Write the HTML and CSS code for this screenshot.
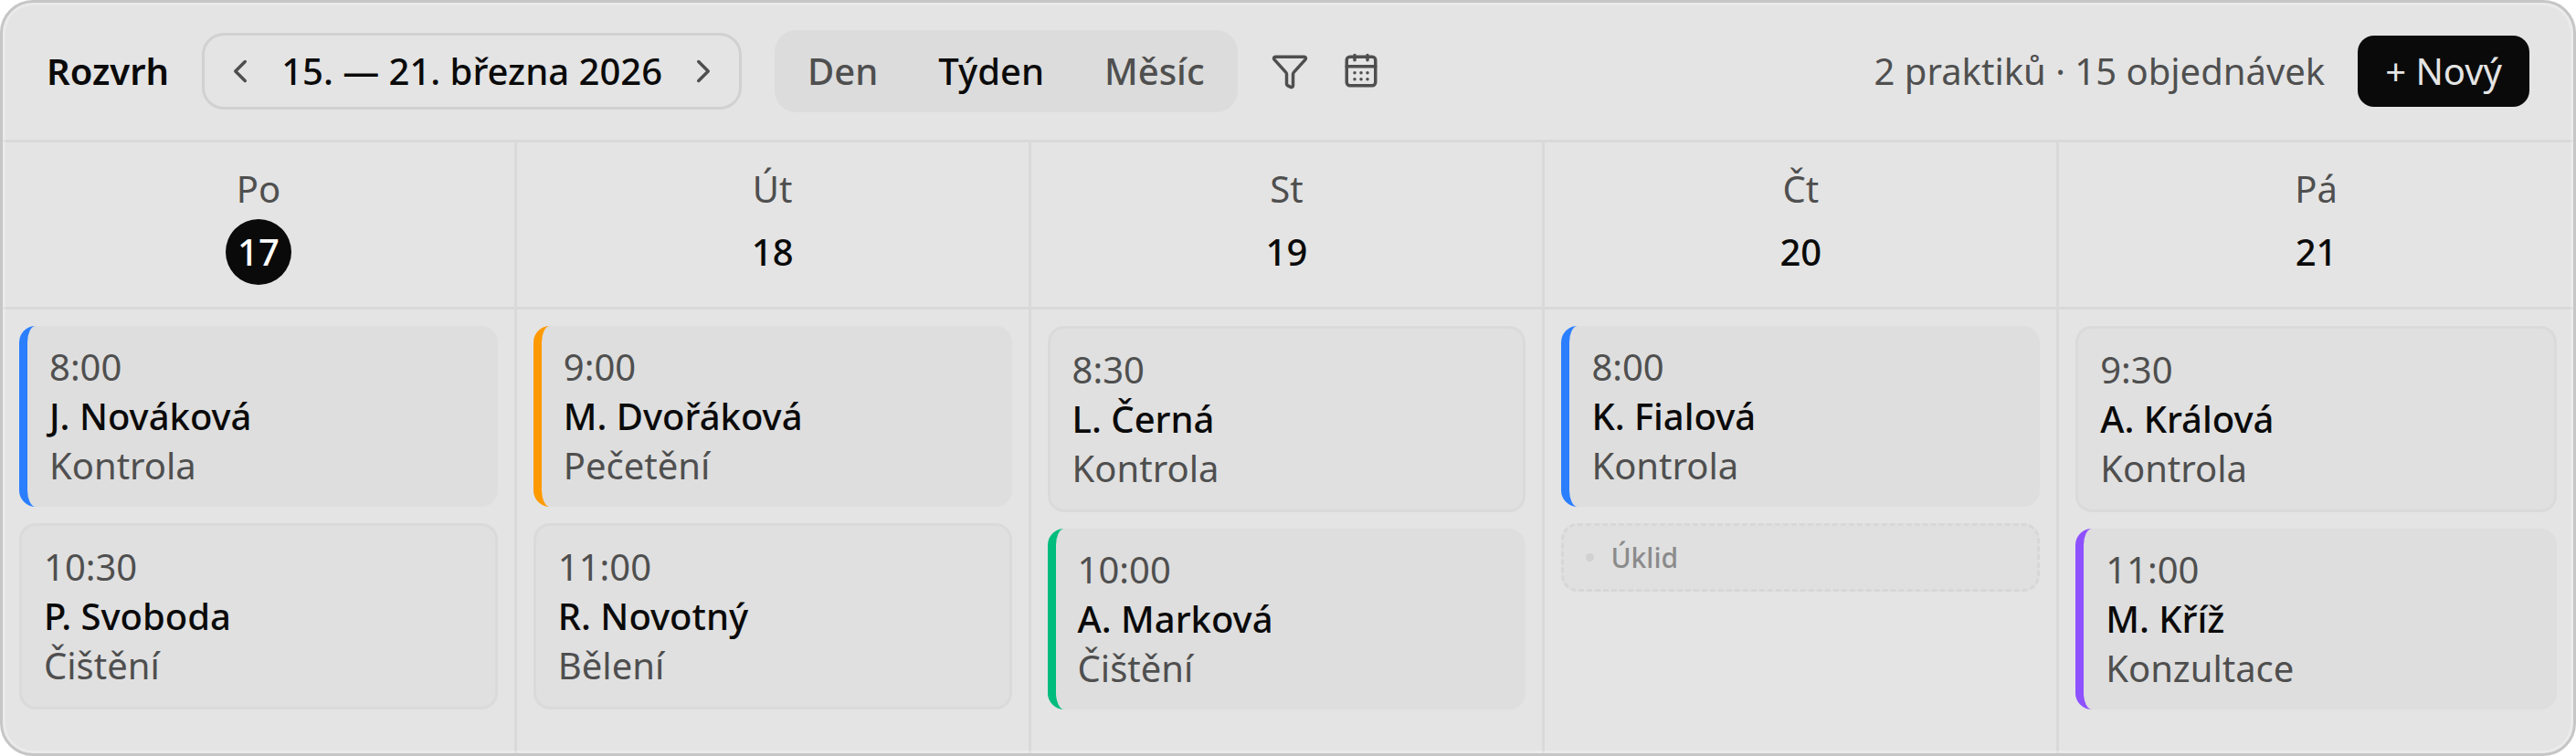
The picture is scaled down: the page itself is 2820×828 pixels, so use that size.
FILE: index.html
```html
<!DOCTYPE html>
<html lang="cs">
<head>
<meta charset="utf-8">
<meta name="viewport" content="width=device-width, initial-scale=1">
<title>Rozvrh</title>
<link rel="stylesheet" href="styles.css">
</head>
<body>
<main class="schedule">
  <header class="toolbar">
    <h1 class="title">Rozvrh</h1>
    <div class="range">
      <button class="icon-button" type="button" aria-label="Předchozí týden">
        <svg class="icon" viewBox="0 0 24 24"><path d="m15 18-6-6 6-6"/></svg>
      </button>
      <span class="range-label">15. — 21. března 2026</span>
      <button class="icon-button" type="button" aria-label="Další týden">
        <svg class="icon" viewBox="0 0 24 24"><path d="m9 18 6-6-6-6"/></svg>
      </button>
    </div>
    <div class="views">
      <button class="view" type="button">Den</button>
      <button class="view view-active" type="button" aria-pressed="true">Týden</button>
      <button class="view" type="button">Měsíc</button>
    </div>
    <button class="icon-button" type="button" aria-label="Filtr">
      <svg class="icon" viewBox="0 0 24 24"><path d="M10 20a1 1 0 0 0 .553.895l2 1A1 1 0 0 0 14 21v-7a2 2 0 0 1 .517-1.341L21.74 4.67A1 1 0 0 0 21 3H3a1 1 0 0 0-.742 1.67l7.225 7.989A2 2 0 0 1 10 14z"/></svg>
    </button>
    <button class="icon-button" type="button" aria-label="Kalendář">
      <svg class="icon" viewBox="0 0 24 24"><rect x="3" y="3" width="18" height="18" rx="2"/><path d="M8 2v3M16 2v3M3 9h18M8 13h.01M12 13h.01M16 13h.01M8 17h.01M12 17h.01M16 17h.01"/></svg>
    </button>
    <p class="summary">2 praktiků · 15 objednávek</p>
    <button class="new-button" type="button">+ Nový</button>
  </header>
  <div class="week">
    <section class="day">
      <h2 class="day-head"><span class="day-name">Po</span><span class="day-number today">17</span></h2>
      <div class="day-body">
        <article class="card accent blue"><p>8:00</p><h3 class="patient">J. Nováková</h3><p>Kontrola</p></article>
        <article class="card"><p>10:30</p><h3 class="patient">P. Svoboda</h3><p>Čištění</p></article>
      </div>
    </section>
    <section class="day">
      <h2 class="day-head"><span class="day-name">Út</span><span class="day-number">18</span></h2>
      <div class="day-body">
        <article class="card accent orange"><p>9:00</p><h3 class="patient">M. Dvořáková</h3><p>Pečetění</p></article>
        <article class="card"><p>11:00</p><h3 class="patient">R. Novotný</h3><p>Bělení</p></article>
      </div>
    </section>
    <section class="day">
      <h2 class="day-head"><span class="day-name">St</span><span class="day-number">19</span></h2>
      <div class="day-body">
        <article class="card"><p>8:30</p><h3 class="patient">L. Černá</h3><p>Kontrola</p></article>
        <article class="card accent green"><p>10:00</p><h3 class="patient">A. Marková</h3><p>Čištění</p></article>
      </div>
    </section>
    <section class="day">
      <h2 class="day-head"><span class="day-name">Čt</span><span class="day-number">20</span></h2>
      <div class="day-body">
        <article class="card accent blue"><p>8:00</p><h3 class="patient">K. Fialová</h3><p>Kontrola</p></article>
        <div class="block"><span class="dot"></span>Úklid</div>
      </div>
    </section>
    <section class="day">
      <h2 class="day-head"><span class="day-name">Pá</span><span class="day-number">21</span></h2>
      <div class="day-body">
        <article class="card"><p>9:30</p><h3 class="patient">A. Králová</h3><p>Kontrola</p></article>
        <article class="card accent violet"><p>11:00</p><h3 class="patient">M. Kříž</h3><p>Konzultace</p></article>
      </div>
    </section>
  </div>
</main>
</body>
</html>
```
FILE: styles.css
```css
:root {
  --ink: #0a0a0a;
  --muted: #4f4f4f;
  --surface: #e4e4e4;
  --line: #d9d9d9;
}

*,
*::before {
  box-sizing: border-box;
}

body {
  margin: 0;
  background: #fff;
  color: var(--ink);
  font: 400 40px/54px "Noto Sans", sans-serif;
}

h1, h2, h3, p {
  margin: 0;
  font: inherit;
}

button {
  margin: 0;
  padding: 0;
  border: 0;
  background: none;
  color: inherit;
  font: inherit;
  cursor: pointer;
}

.schedule {
  position: relative;
  display: flex;
  flex-direction: column;
  min-height: 100vh;
  overflow: hidden;
  border: 3px solid #c6c6c6;
  border-radius: 36px;
  background: var(--surface);
}

/* Light inner rim along the panel's edge */
.schedule::before {
  content: "";
  position: absolute;
  inset: 0;
  border-radius: 33px;
  box-shadow: inset 0 0 0 3px rgba(255, 255, 255, 0.25);
  pointer-events: none;
}

.toolbar {
  display: flex;
  align-items: center;
  gap: 36px;
  padding: 30px 48px;
  border-bottom: 3px solid var(--line);
}

.title {
  font-weight: 600;
}

.range {
  display: flex;
  align-items: center;
  gap: 24px;
  padding: 12px 18px;
  border: 3px solid #d1d1d1;
  border-radius: 24px;
}

.range-label {
  font-weight: 500;
}

.icon-button {
  display: flex;
  color: var(--muted);
}

.icon {
  width: 42px;
  height: 42px;
  fill: none;
  stroke: currentColor;
  stroke-width: 2;
  stroke-linecap: round;
  stroke-linejoin: round;
}

.views {
  display: flex;
  gap: 6px;
  padding: 6px;
  border-radius: 24px;
  background: #dcdcdc;
}

.view {
  padding: 12px 30px;
  color: var(--muted);
  font-weight: 500;
}

.view-active {
  color: var(--ink);
}

.summary {
  margin-left: auto;
  color: var(--muted);
}

.new-button {
  padding: 12px 30px;
  border-radius: 18px;
  background: var(--ink);
  color: var(--surface);
}

.week {
  flex: 1;
  display: grid;
  grid-template-columns: repeat(5, minmax(0, 1fr));
}

.day {
  display: flex;
  flex-direction: column;
  border-right: 3px solid var(--line);
}

.day:last-child {
  border-right: 0;
}

.day-head {
  display: flex;
  flex-direction: column;
  align-items: center;
  gap: 6px;
  padding: 24px;
  border-bottom: 3px solid var(--line);
}

.day-name {
  color: var(--muted);
}

.day-number {
  width: 72px;
  line-height: 72px;
  text-align: center;
  font-weight: 500;
}

.today {
  border-radius: 50%;
  background: var(--ink);
  color: #fff;
}

.day-body {
  display: flex;
  flex-direction: column;
  gap: 18px;
  padding: 18px;
}

.card {
  padding: 18px 24px;
  border: 3px solid #dadada;
  border-radius: 18px;
  background: #e0e0e0;
  color: var(--muted);
}

.patient {
  color: var(--ink);
  font-weight: 500;
}

.accent {
  border-width: 0 0 0 9px;
  background: #dedede;
}

.blue { border-color: #2b7fff; }
.orange { border-color: #fe9a00; }
.green { border-color: #00bc7d; }
.violet { border-color: #8e51ff; }

.block {
  display: flex;
  align-items: center;
  gap: 18px;
  padding: 12px 24px;
  border: 3px dashed #d7d7d7;
  border-radius: 18px;
  background: #e0e0e0;
  color: #8b8b8b;
  font-size: 30px;
  font-weight: 500;
  line-height: 45px;
}

.dot {
  width: 9px;
  height: 9px;
  border-radius: 50%;
  background: #d1d1d1;
}
```
